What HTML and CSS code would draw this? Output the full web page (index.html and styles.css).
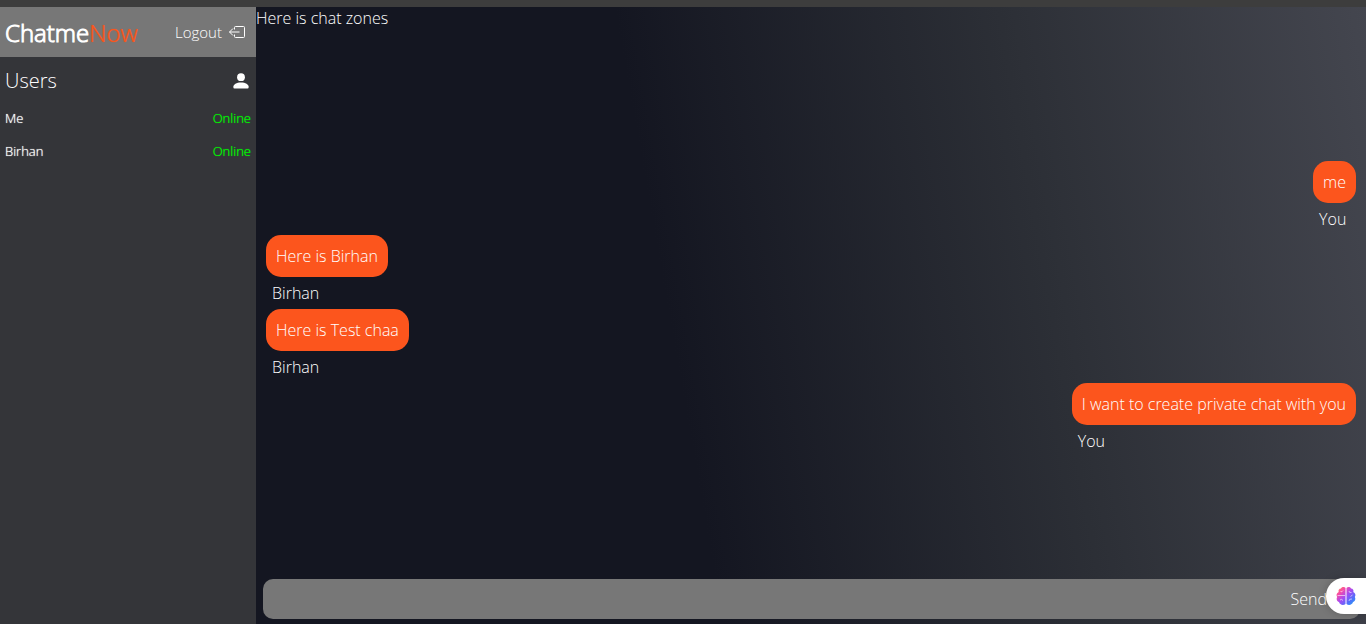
FILE: index.html
```html
<!DOCTYPE html>
<html lang="en">
<head>
<meta charset="utf-8">
<title>ChatmeNow</title>
<link rel="stylesheet" href="styles.css">
</head>
<body>
<div class="app">
  <aside class="sidebar">
    <header class="brand-bar">
      <h1 class="brand"><strong>Chatme</strong><span class="brand-accent">Now</span></h1>
      <button class="logout" type="button">Logout
        <svg class="icon" viewBox="0 0 18 18" fill="none" stroke="currentColor" aria-hidden="true"><path d="M6.500 6.500V4.500Q6.500 3.500 7.500 3.500H15.500Q16.500 3.500 16.500 4.500V13.500Q16.500 14.500 15.500 14.500H7.500Q6.500 14.500 6.500 13.500V11.500M11.500 9H1.500M5 5.500L1.500 9L5 12.500"/></svg>
      </button>
    </header>
    <section class="users">
      <div class="users-head">
        <h2 class="users-title">Users</h2>
        <svg class="user-icon" viewBox="0 0 16 16" fill="currentColor" aria-hidden="true"><circle cx="8" cy="4.200" r="3.900"/><path d="M8 9.500C3.500 9.500 .3 11.600.3 14Q.3 15.500 1.500 15.500H14.500Q15.700 15.500 15.700 14C15.700 11.600 12.500 9.500 8 9.500Z"/></svg>
      </div>
      <ul class="user-list">
        <li class="user"><span>Me</span><span class="status">Online</span></li>
        <li class="user"><span>Birhan</span><span class="status">Online</span></li>
      </ul>
    </section>
  </aside>
  <main class="chat">
    <p class="chat-title">Here is chat zones</p>
    <div class="messages">
      <article class="message mine"><p class="bubble">me</p><p class="author">You</p></article>
      <article class="message"><p class="bubble">Here is Birhan</p><p class="author">Birhan</p></article>
      <article class="message"><p class="bubble">Here is Test chaa</p><p class="author">Birhan</p></article>
      <article class="message mine"><p class="bubble">I want to create private chat with you</p><p class="author">You</p></article>
    </div>
    <form class="composer">
      <input class="composer-input" type="text" aria-label="Message">
      <button class="send" type="button">Send</button>
    </form>
  </main>
</div>
<button class="assistant" type="button" aria-label="Assistant">
  <svg class="brain" viewBox="0 0 20 20" aria-hidden="true">
    <defs><linearGradient id="brain-fill" x1="0" y1="0" x2="1" y2="1"><stop offset="0" stop-color="#ff9a3c"/><stop offset=".25" stop-color="#f748a8"/><stop offset=".5" stop-color="#a04df5"/><stop offset=".75" stop-color="#5070fa"/><stop offset="1" stop-color="#1aa5f5"/></linearGradient></defs>
    <path fill="url(#brain-fill)" d="M9.500 2C8.500.5 5.500.5 5 2.500C3 2.500 2 4.500 2.700 6C.5 7 0 9.500 1.200 11C0 13 1 15.500 3 16C3.500 18.500 7 20 9.500 18ZM10.500 2C11.500.5 14.500.5 15 2.500C17 2.500 18 4.500 17.300 6C19.500 7 20 9.500 18.800 11C20 13 19 15.500 17 16C16.500 18.500 13 20 10.500 18Z"/>
    <path fill="none" stroke="#fff" stroke-width=".8" opacity=".75" d="M4.500 5.500Q6 6.500 7 4.500M1.500 9.500H9M4 14Q5.500 12.500 7 14.500M13 5Q13 7 15.500 6.500M14.500 10.500L16.500 9M13 15Q13 12.500 16 13"/>
  </svg>
</button>
</body>
</html>
```
FILE: styles.css
```css
* { box-sizing: border-box; }

body, h1, h2, p, ul { margin: 0; padding: 0; }

body {
  font-family: "Open Sans", sans-serif;
  font-size: 16px;
  font-weight: 300;
  line-height: 22px;
  color: #fff;
  background: linear-gradient(80deg, #141621 49%, #2c2f36 75%, #44464f 100%);
}

button, input {
  font: inherit;
  color: inherit;
  background: none;
  border: 0;
  padding: 0;
}

.app {
  display: grid;
  grid-template-columns: 256px 1fr;
  min-height: 100vh;
  border-top: 7px solid #3d3d3d;
}

.sidebar { background: #343539; }

.brand-bar {
  display: flex;
  align-items: center;
  justify-content: space-between;
  height: 50px;
  padding: 0 10px 0 5px;
  background: #777;
}

.brand { padding-top: 2px; font-size: 24px; font-weight: 300; line-height: 32px; }
.brand strong { font-weight: 300; -webkit-text-stroke: 1px currentColor; }
.brand-accent { color: #fc551d; text-shadow: 0 0 1px currentColor; }

.logout { display: flex; align-items: center; gap: 6px; font-size: 15px; }
.icon { width: 18px; height: 18px; }

.users { padding: 8px 5px; }
.users-head { display: flex; align-items: center; justify-content: space-between; padding-right: 2px; }
.users-title { font-size: 20px; font-weight: 300; line-height: 32px; }
.user-icon { width: 16px; height: 16px; }

.user-list { list-style: none; padding-top: 5px; }
.user { display: flex; justify-content: space-between; font-size: 13px; line-height: 33px; text-shadow: 0 0 1px currentColor; }
.status { color: #0f0; text-shadow: 0 0 1px currentColor; }

.chat { display: flex; flex-direction: column; }

.messages {
  flex: 1;
  display: flex;
  flex-direction: column;
  align-items: flex-start;
  padding: 132px 10px 0;
}

.mine { align-self: flex-end; }
.bubble { padding: 10px; border-radius: 15px; background: #fc551d; }
.author { padding: 5px 6px; }

.composer {
  display: flex;
  align-items: center;
  height: 40px;
  margin: 0 6px 5px 7px;
  padding-right: 33px;
  border-radius: 10px;
  background: #777;
}

.composer-input { flex: 1; min-width: 0; height: 40px; outline: none; }

.assistant {
  position: fixed;
  right: 0;
  bottom: 10px;
  display: flex;
  align-items: center;
  width: 40px;
  height: 36px;
  padding-left: 10px;
  border-radius: 18px 0 0 18px;
  background: #fff;
  box-shadow: 0 0 8px #0003;
}

.brain { width: 20px; height: 20px; }
```
